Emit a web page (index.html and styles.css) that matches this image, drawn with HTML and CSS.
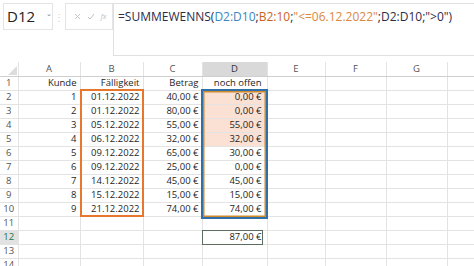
FILE: index.html
```html
<!DOCTYPE html>
<html lang="de">
<head>
<meta charset="utf-8">
<link rel="stylesheet" href="styles.css">
</head>
<body>
<div class="toolbar">
  <div class="namebox"><span class="ref">D12</span><span class="caret">&#8964;</span></div>
  <div class="sep">&#8942;</div>
  <div class="fbtns">
    <svg width="7" height="7" viewBox="0 0 7 7"><path d="M1 1L6 6M6 1L1 6" stroke="#c4c4c4" stroke-width="1" fill="none"/></svg>
    <svg width="8" height="7" viewBox="0 0 8 7"><path d="M1 4L3 6L7 1" stroke="#c4c4c4" stroke-width="1" fill="none"/></svg>
    <span class="fx">fx</span>
  </div>
  <div class="formula"><span class="fn">=SUMMEWENNS(</span><span class="blue">D2:D10</span><span class="fn">;</span><span class="orange">B2:10</span><span class="fn">;</span><span class="str">"&lt;=06.12.2022"</span><span class="fn">;D2:D10;"&gt;0")</span></div>
</div>
<div class="sheet">
  <table class="grid">
    <colgroup>
      <col class="w-rh"><col class="w-a"><col class="w-b"><col class="w-c"><col class="w-d"><col class="w-e"><col class="w-f"><col class="w-g"><col class="w-h">
    </colgroup>
    <tr class="hdr">
      <th class="corner"><span class="tri"></span></th><th>A</th><th>B</th><th>C</th><th class="sel">D</th><th>E</th><th>F</th><th>G</th><th></th>
    </tr>
    <tr><th class="rh">1</th><td>Kunde</td><td>Fälligkeit</td><td>Betrag</td><td class="dc">noch offen</td><td></td><td></td><td></td><td></td></tr>
    <tr><th class="rh">2</th><td>1</td><td>01.12.2022</td><td>40,00 €</td><td class="dc fill">0,00 €</td><td></td><td></td><td></td><td></td></tr>
    <tr><th class="rh">3</th><td>2</td><td>01.12.2022</td><td>80,00 €</td><td class="dc fill">0,00 €</td><td></td><td></td><td></td><td></td></tr>
    <tr><th class="rh">4</th><td>3</td><td>05.12.2022</td><td>55,00 €</td><td class="dc fill">55,00 €</td><td></td><td></td><td></td><td></td></tr>
    <tr><th class="rh">5</th><td>4</td><td>06.12.2022</td><td>32,00 €</td><td class="dc fill">32,00 €</td><td></td><td></td><td></td><td></td></tr>
    <tr><th class="rh">6</th><td>5</td><td>09.12.2022</td><td>65,00 €</td><td class="dc">30,00 €</td><td></td><td></td><td></td><td></td></tr>
    <tr><th class="rh">7</th><td>6</td><td>09.12.2022</td><td>25,00 €</td><td class="dc">0,00 €</td><td></td><td></td><td></td><td></td></tr>
    <tr><th class="rh">8</th><td>7</td><td>14.12.2022</td><td>45,00 €</td><td class="dc">45,00 €</td><td></td><td></td><td></td><td></td></tr>
    <tr><th class="rh">9</th><td>8</td><td>15.12.2022</td><td>15,00 €</td><td class="dc">15,00 €</td><td></td><td></td><td></td><td></td></tr>
    <tr><th class="rh">10</th><td>9</td><td>21.12.2022</td><td>74,00 €</td><td class="dc">74,00 €</td><td></td><td></td><td></td><td></td></tr>
    <tr><th class="rh">11</th><td></td><td></td><td></td><td></td><td></td><td></td><td></td><td></td></tr>
    <tr><th class="rh sel-row">12</th><td></td><td></td><td></td><td class="dc">87,00 €</td><td></td><td></td><td></td><td></td></tr>
    <tr><th class="rh">13</th><td></td><td></td><td></td><td></td><td></td><td></td><td></td><td></td></tr>
    <tr><th class="rh">14</th><td></td><td></td><td></td><td></td><td></td><td></td><td></td><td></td></tr>
  </table>
  <div class="range-b"></div>
  <div class="range-d"></div>
  <div class="active"></div>
</div>
</body>
</html>
```
FILE: styles.css
```css
* { box-sizing: border-box; }
html, body { margin: 0; padding: 0; background: #fff; overflow: hidden; }
body { width: 474px; height: 266px; font-family: "Open Sans", "Noto Sans", sans-serif; }

.toolbar { display: flex; align-items: flex-start; padding: 3px 0 0 3px; height: 62px; }
.namebox { width: 50px; height: 27px; border: 1px solid #e4e4e4; display: flex; align-items: center; padding-left: 3px; position: relative; }
.namebox .ref { font-size: 15px; color: #222; line-height: 1; }
.namebox .caret { position: absolute; left: 42px; top: 5px; font-size: 7px; color: #777; }
.sep { width: 12px; height: 27px; color: #d0d0d0; font-size: 10px; display: flex; align-items: center; justify-content: center; }
.fbtns { width: 48px; height: 27px; border: 1px solid #e4e4e4; display: flex; align-items: center; justify-content: center; gap: 6px; padding-left: 2px; }
.fbtns .fx { font-size: 7px; color: #c0c0c0; font-style: italic; }
.formula { flex: 1; height: 53px; border: 1px solid #e0e0e0; border-right: none; padding: 4px 0 0 4px; font-size: 12px; line-height: 18px; white-space: nowrap; }
.fn { color: #2d2d4a; }
.blue { color: #3a86bd; }
.orange { color: #c7651f; }
.str { color: #d9893f; }

.sheet { position: relative; }
.grid { border-collapse: collapse; table-layout: fixed; width: 474px; }
.w-rh { width: 18px; } .w-a { width: 62px; } .w-b { width: 63px; } .w-c { width: 59px; }
.w-d { width: 65px; } .w-e { width: 58px; } .w-f { width: 61px; } .w-g { width: 61px; } .w-h { width: 27px; }
.grid tr { height: 14px; }
.grid td, .grid th { height: 14px; padding: 0 3px 0 0; border: 1px solid #e3e3e3; font-size: 9.5px; line-height: 12px; font-weight: normal; white-space: nowrap; overflow: visible; }
.grid td { text-align: right; color: #1e1e1e; }
.grid td.dc { padding-right: 5px; }
.grid .hdr th { text-align: center; color: #555; border-top: none; border-bottom: 1px solid #cfcfcf; padding: 0; }
.grid .hdr th.sel { background: #d9d9d9; color: #333; }
.grid th.corner { position: relative; border-left: none; }
.tri { position: absolute; right: 1px; bottom: 1px; width: 0; height: 0; border-left: 9px solid transparent; border-bottom: 9px solid #dcdcdc; }
.grid th.rh { text-align: center; color: #555; border-left: none; padding: 0; }
.grid th.sel-row { background: #e2e2e2; color: #217346; }
.grid td.fill { background: #fbe1d4; }

.range-b { position: absolute; left: 80px; top: 27px; width: 64px; height: 128px; border: 2px solid #e8772e; }
.range-d { position: absolute; left: 201px; top: 27px; width: 67px; height: 130px; border: 2px solid #2f70a8; box-shadow: inset 0 0 0 1.5px #d08a2e; }
.active { position: absolute; left: 202px; top: 168px; width: 61px; height: 15px; border: 1px solid #5d6e60; }
```
